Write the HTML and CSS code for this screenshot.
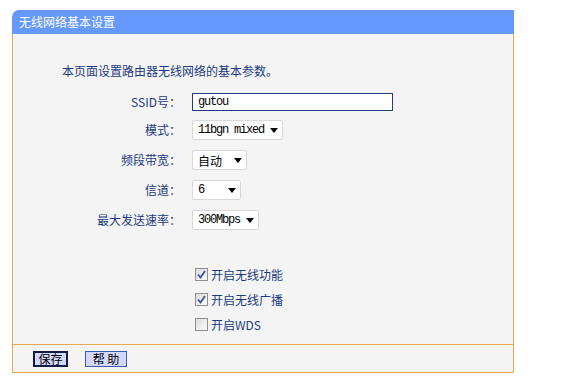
FILE: index.html
```html
<!DOCTYPE html>
<html>
<head>
<meta charset="utf-8">
<link rel="stylesheet" href="styles.css">
</head>
<body>
<div class="panel">
  <div class="head">无线网络基本设置</div>
  <div class="content">
    <p class="intro">本页面设置路由器无线网络的基本参数。</p>
    <div class="form">
      <label class="lbl">SSID号：</label>
      <div class="ctl"><div class="input">gutou</div></div>
      <label class="lbl">模式：</label>
      <div class="ctl"><div class="select w-mode"><span class="mono">11bgn mixed</span><svg class="arrow" width="8" height="5" viewBox="0 0 8 5"><path d="M0 0H8L4 5Z" fill="#000"/></svg></div></div>
      <label class="lbl">频段带宽：</label>
      <div class="ctl"><div class="select w-band"><span>自动</span><svg class="arrow" width="8" height="5" viewBox="0 0 8 5"><path d="M0 0H8L4 5Z" fill="#000"/></svg></div></div>
      <label class="lbl">信道：</label>
      <div class="ctl"><div class="select w-chan"><span class="mono">6</span><svg class="arrow" width="8" height="5" viewBox="0 0 8 5"><path d="M0 0H8L4 5Z" fill="#000"/></svg></div></div>
      <label class="lbl">最大发送速率：</label>
      <div class="ctl"><div class="select w-rate"><span class="mono">300Mbps</span><svg class="arrow" width="8" height="5" viewBox="0 0 8 5"><path d="M0 0H8L4 5Z" fill="#000"/></svg></div></div>
    </div>
    <div class="checks">
      <div class="chk"><span class="box"><svg width="9" height="9" viewBox="0 0 9 9"><path d="M1 4.5L3.5 7.5L8 1" fill="none" stroke="#3f5592" stroke-width="1.8"/></svg></span>开启无线功能</div>
      <div class="chk"><span class="box"><svg width="9" height="9" viewBox="0 0 9 9"><path d="M1 4.5L3.5 7.5L8 1" fill="none" stroke="#3f5592" stroke-width="1.8"/></svg></span>开启无线广播</div>
      <div class="chk"><span class="box"></span>开启WDS</div>
    </div>
  </div>
  <div class="foot">
    <button class="btn btn-save">保存</button>
    <button class="btn btn-help">帮 助</button>
  </div>
</div>
</body>
</html>
```
FILE: styles.css
```css
* { box-sizing: border-box; }
body {
  margin: 0;
  background: #fff;
  font-family: "Noto Sans CJK SC", "Liberation Sans", sans-serif;
  font-size: 12px;
}
.panel {
  margin: 10px 0 0 12px;
  width: 502px;
}
.head {
  height: 24px;
  line-height: 24px;
  background: #6699ff;
  color: #fff;
  padding-left: 7px;
  border-top-left-radius: 7px;
}
.content {
  background: #f4f4f4;
  border-left: 1px solid #e8a850;
  border-right: 1px solid #e8a850;
  padding-top: 29px;
  padding-bottom: 7px;
}
.intro {
  margin: 0 0 0 49px;
  height: 16px;
  line-height: 16px;
  color: #1c3a80;
}
.form {
  margin-top: 10px;
  display: grid;
  grid-template-columns: 168px 1fr;
  grid-template-rows: 26px repeat(4, 30px);
  column-gap: 11px;
  align-items: center;
}
.lbl {
  text-align: right;
  color: #1c3a80;
  line-height: 16px;
}
.ctl { display: flex; align-items: center; }
.input {
  width: 201px;
  height: 18px;
  border: 1px solid #1f3f7f;
  background: #fff;
  font-family: "Liberation Mono", monospace;
  font-size: 12px;
  letter-spacing: -1.2px;
  line-height: 16px;
  padding-left: 5px;
  color: #000;
}
.select {
  height: 20px;
  border: 1px solid #d8d8d8;
  border-radius: 2px;
  background: #fff;
  display: flex;
  align-items: center;
  justify-content: space-between;
  padding: 0 4px 0 5px;
  color: #000;
}
.mono {
  font-family: "Liberation Mono", monospace;
  font-size: 12px;
  letter-spacing: -1.2px;
}
.w-mode { width: 91px; }
.w-band { width: 55px; }
.w-chan { width: 49px; }
.w-rate { width: 67px; }
.checks {
  margin-top: 27px;
  padding-left: 182px;
}
.chk {
  height: 25px;
  display: flex;
  align-items: center;
  color: #1c3a80;
}
.box {
  width: 13px;
  height: 13px;
  border: 1px solid #8e8f8f;
  background: linear-gradient(135deg, #dcdcdc, #fbfbfb);
  margin-right: 3px;
  display: flex;
  align-items: center;
  justify-content: center;
}
.foot {
  background: #f4f4f4;
  border: 1px solid #e8a850;
  height: 29px;
  padding: 6px 0 0 20px;
  display: flex;
  align-items: flex-start;
}
.btn {
  font-family: "Noto Sans CJK SC", sans-serif;
  font-size: 12px;
  height: 16px;
  line-height: 12px;
  padding: 0;
  background: #d4d8fc;
  color: #000;
  cursor: pointer;
}
.btn-save {
  width: 35px;
  border: 2px solid #101c44;
}
.btn-help {
  width: 42px;
  margin-left: 17px;
  border: 1px solid #3b5bb0;
}
```
